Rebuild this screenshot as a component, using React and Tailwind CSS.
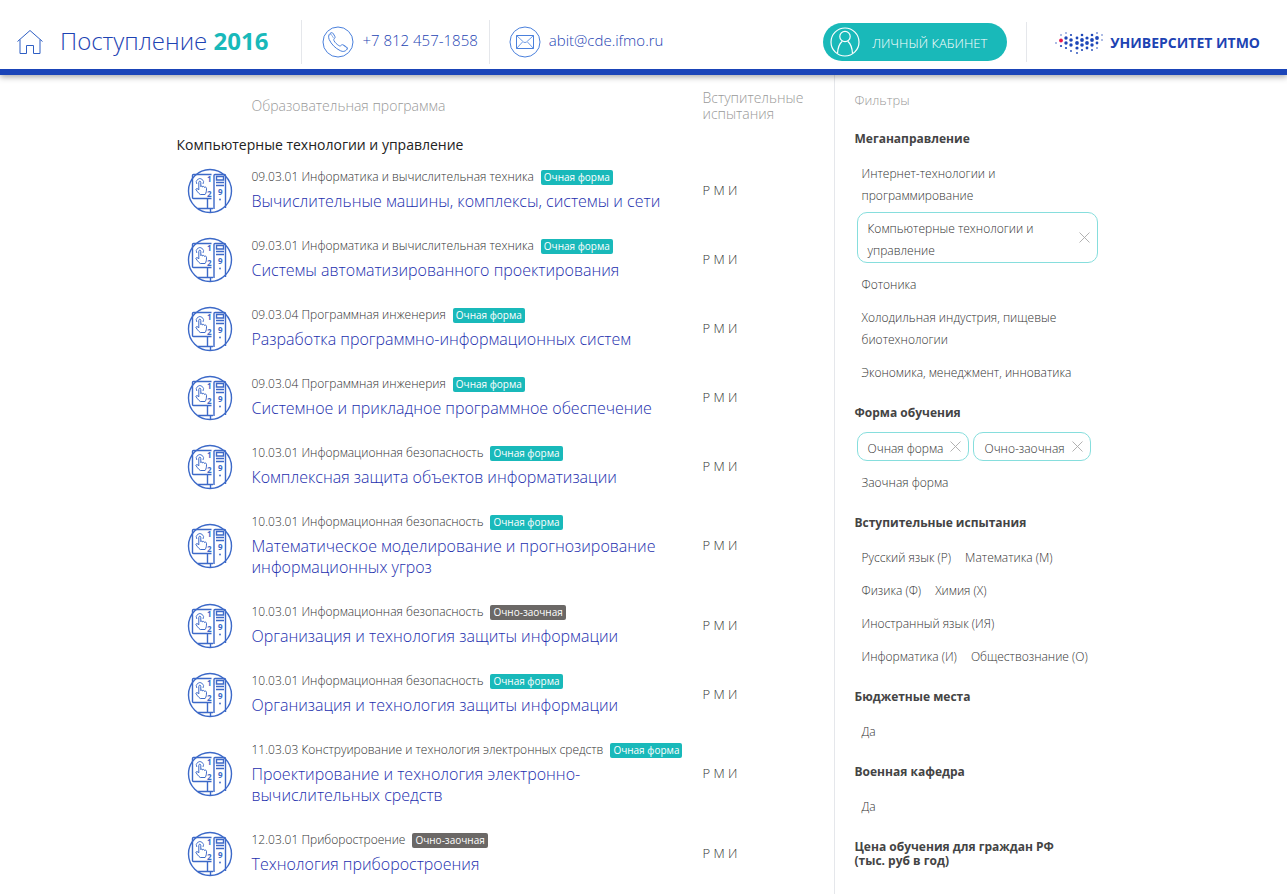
import React, { useState } from 'react';

const programs = [
  { code: '09.03.01', field: 'Информатика и вычислительная техника', form: 'Очная форма', title: 'Вычислительные машины, комплексы, системы и сети' },
  { code: '09.03.01', field: 'Информатика и вычислительная техника', form: 'Очная форма', title: 'Системы автоматизированного проектирования' },
  { code: '09.03.04', field: 'Программная инженерия', form: 'Очная форма', title: 'Разработка программно-информационных систем' },
  { code: '09.03.04', field: 'Программная инженерия', form: 'Очная форма', title: 'Системное и прикладное программное обеспечение' },
  { code: '10.03.01', field: 'Информационная безопасность', form: 'Очная форма', title: 'Комплексная защита объектов информатизации' },
  { code: '10.03.01', field: 'Информационная безопасность', form: 'Очная форма', title: 'Математическое моделирование и прогнозирование информационных угроз' },
  { code: '10.03.01', field: 'Информационная безопасность', form: 'Очно-заочная', title: 'Организация и технология защиты информации' },
  { code: '10.03.01', field: 'Информационная безопасность', form: 'Очная форма', title: 'Организация и технология защиты информации' },
  { code: '11.03.03', field: 'Конструирование и технология электронных средств', form: 'Очная форма', title: 'Проектирование и технология электронно-вычислительных средств' },
  { code: '12.03.01', field: 'Приборостроение', form: 'Очно-заочная', title: 'Технология приборостроения' },
];

const filterGroups = [
  {
    title: 'Меганаправление',
    options: [
      'Интернет-технологии и программирование',
      'Компьютерные технологии и управление',
      'Фотоника',
      'Холодильная индустрия, пищевые биотехнологии',
      'Экономика, менеджмент, инноватика',
    ],
    stacked: true,
  },
  { title: 'Форма обучения', options: ['Очная форма', 'Очно-заочная', 'Заочная форма'] },
  {
    title: 'Вступительные испытания',
    options: [
      'Русский язык (Р)',
      'Математика (М)',
      'Физика (Ф)',
      'Химия (Х)',
      'Иностранный язык (ИЯ)',
      'Информатика (И)',
      'Обществознание (О)',
    ],
  },
  { title: 'Бюджетные места', options: ['Да'] },
  { title: 'Военная кафедра', options: ['Да'] },
  { title: 'Цена обучения для граждан РФ (тыс. руб в год)', options: [] },
];

// [x, y, radius]
const logoDots = [
  [2, 12, 0.7],
  [7, 4, 0.7], [7, 15, 1.1],
  [12, 2, 0.7], [12, 7, 1.7], [12, 12, 1.7], [12, 17, 1.1],
  [17, 4, 1.1], [17, 9, 1.8], [17, 14, 1.7], [17, 20, 0.9],
  [23, 7, 1.4], [23, 12, 1.9], [23, 17, 1.6], [23, 22, 0.9],
  [28, 4, 1.3], [28, 9, 1.9], [28, 14, 1.8], [28, 19, 1.1],
  [33, 7, 1.6], [33, 12, 1.9], [33, 17, 1.4],
  [38, 4, 1.3], [38, 9, 1.9], [38, 14, 1.7], [38, 19, 0.9],
  [43, 2, 0.8], [43, 7, 1.9], [43, 12, 1.4], [43, 17, 0.8],
  [48, 4, 0.7], [48, 9, 0.7],
];

const HomeIcon = () => (
  <svg className="h-[26px] w-7 shrink-0" viewBox="0 0 28 26" fill="none" stroke="#2f5fc4" strokeWidth="1">
    <path d="M1.5 12.5 14 1.5l12.500 11M4 10.500V24.500h6.500V16.500h7v8h6.500V10.500" />
  </svg>
);

const PhoneIcon = () => (
  <svg className="size-8 shrink-0" viewBox="0 0 32 32" fill="none" stroke="#4a80dc" strokeWidth="1">
    <circle cx="16" cy="16" r="15" />
    <path d="M8 7.500c1.300-1.200 2.600-1 3.300.2l1.500 2.600c.6 1.100.2 1.700-.6 2.500-.7.600-.5 1.400 0 2.200 1 1.700 2.600 3.300 4.500 4.500.9.600 1.600.7 2.200 0 .8-.8 1.500-1.100 2.500-.5l3 1.900c1.100.8 1.200 2 .1 3-1.500 1.600-3.600 2.100-6.200.8C13.200 22.200 9.300 18.200 7.200 13.500 6.200 11 6.500 8.900 8 7.500z" />
    <path d="m7.500 8.800 1.400-.8 2.800 4.300M25 23.600l.4-1.600-4.200-2.700" strokeWidth="0.6" />
  </svg>
);

const MailIcon = () => (
  <svg className="size-8 shrink-0" viewBox="0 0 32 32" fill="none" stroke="#4a80dc" strokeWidth="1">
    <circle cx="16" cy="16" r="15" />
    <path d="M7.500 9.500h17v13h-17z" />
    <path d="m7.500 9.500 7 6.500q1.500 1.200 3 0l7-6.500M7.500 22.500l6-6.500M24.500 22.500l-6-6.500" strokeWidth="0.8" />
  </svg>
);

const UserIcon = () => (
  <svg className="size-[30px] shrink-0" viewBox="0 0 30 30" fill="none" stroke="white" strokeWidth="1.2">
    <circle cx="15" cy="15" r="14" />
    <circle cx="15" cy="9.500" r="5.200" />
    <path d="M7.500 26.500c.4-6.500 2-10 4.800-12.200M22.500 26.500c-.4-6.500-2-10-4.800-12.200" />
  </svg>
);

const LogoMark = () => (
  <svg className="h-6 w-[50px] shrink-0" viewBox="0 0 50 24" fill="#1d46b8">
    {logoDots.map(([x, y, r]) => (
      <circle key={`${x}-${y}`} cx={x} cy={y} r={r} />
    ))}
    <circle cx="7" cy="9.500" r="1.900" fill="#e5174f" />
  </svg>
);

const ComputerIcon = () => (
  <svg className="block size-[46px]" viewBox="0 0 46 46" fill="none" stroke="#3c69c8" strokeWidth="1.400">
    <circle cx="23" cy="23" r="21.500" />
    <path d="M24.500 6.500H6.500Q5.500 6.500 5.500 7.500V29.500q0 1 1 1H24.500M20.500 30.500v9.500M11 40.500h15M23.500 40.500v4" />
    <path d="M27 41V7.500q0-1 1-1h9.500q1 0 1 1V40M29.500 8.500h7v3.500h-7zM29 14.500h8M29 17.500h8" />
    <path d="M12 25.500c-1.500-1.600-2.600-3-3.200-4.300.8-1 2-.6 3 .7v-7.600c0-1.500 2-1.500 2 0v4.400c.3-1 1.800-.9 1.900.3.500-.9 1.800-.6 1.900.5.700-.8 1.900-.3 1.900.8 0 2.600-.2 4.500-1.400 6.200h-4.800z" strokeWidth="1" />
    <path d="M9.800 16a3.600 3.600 0 1 1 6.200 0" strokeWidth="0.9" />
    <g fill="#3c69c8" stroke="none" className="font-['Open_Sans',sans-serif] text-[8px] font-bold">
      <text x="20" y="14">1</text>
      <text x="20" y="29">2</text>
      <text x="31" y="27">9</text>
    </g>
    <circle cx="33" cy="31.500" r="0.900" fill="#3c69c8" stroke="none" />
  </svg>
);

const CrossIcon = () => (
  <svg className="size-[11px] shrink-0" viewBox="0 0 11 11" stroke="#a9a9a9" strokeWidth="0.9">
    <path d="M.5.5l10 10M10.500.5l-10 10" />
  </svg>
);

const Header = () => (
  <header className="relative flex h-[75px] items-center border-b-6 border-[#1a44b8] bg-white pt-[14px] pr-[27px] pl-4 font-light text-[#1d43b3] shadow-[0_2px_6px_rgba(0,0,0,0.35)]">
    <a href="#home" className="flex items-center gap-4" aria-label="Поступление 2016">
      <HomeIcon />
      <span className="pb-[2px] text-2xl whitespace-nowrap">
        Поступление <b className="font-bold text-[#19b9ba]">2016</b>
      </span>
    </a>
    <a href="tel:+78124571858" className="ml-[33px] flex h-11 items-center gap-2 border-l border-gray-200 pl-5 text-[15px]">
      <PhoneIcon />
      <span className="pb-[2px] whitespace-nowrap">+7 812 457-1858</span>
    </a>
    <a href="mailto:abit@cde.ifmo.ru" className="ml-[11px] flex h-11 items-center gap-2 border-l border-gray-200 pl-[19px] text-[15px]">
      <MailIcon />
      <span className="pb-[2px]">abit@cde.ifmo.ru</span>
    </a>
    <button type="button" className="ml-auto flex h-[38px] items-center gap-3 rounded-full bg-[#19b9b9] pr-5 pl-[7px] text-[13px] whitespace-nowrap text-white">
      <UserIcon />
      <span className="pt-1">ЛИЧНЫЙ КАБИНЕТ</span>
    </button>
    <a href="#itmo" className="ml-[19px] flex h-10 items-center gap-[6px] border-l border-gray-200 pt-[3px] pl-[27px] text-sm font-bold whitespace-nowrap">
      <LogoMark />
      УНИВЕРСИТЕТ ИТМО
    </a>
  </header>
);

const ProgramRow = ({ program }) => (
  <tr>
    <td className="pl-[10px] align-middle">
      <ComputerIcon />
    </td>
    <td className="pt-[11px] pb-[13px] align-top">
      <div className="flex items-center gap-[7px] text-xs leading-5 whitespace-nowrap text-[#333]">
        {program.code} {program.field}
        <span
          className={`rounded-xs px-[3px] text-[10px] leading-[15px] font-normal text-white ${
            program.form === 'Очная форма' ? 'bg-[#19b9ba]' : 'bg-[#6b6866]'
          }`}
        >
          {program.form}
        </span>
      </div>
      <a href="#program" className="mt-1 block pr-6 text-base leading-[21px] text-[#1d2fae]">
        {program.title}
      </a>
    </td>
    <td className="align-middle text-[13px] text-[#333]">Р М И</td>
  </tr>
);

const FilterOption = ({ label, selected, wide, onClick }) => (
  <button
    type="button"
    aria-pressed={selected}
    onClick={onClick}
    className={`flex items-center justify-between gap-[7px] text-left text-xs leading-[22px] ${
      selected ? 'rounded-[10px] border border-[#86dedd] pr-[7px] pl-[10px]' : 'border-y border-transparent px-[5px]'
    } ${selected ? (wide ? 'mb-px' : 'my-px') : ''} ${wide ? 'w-full' : ''}`}
  >
    <span className={`pt-[5px] ${wide ? 'max-w-[210px]' : ''}`}>{label}</span>
    {selected && <CrossIcon />}
  </button>
);

const Filters = () => {
  const [selected, setSelected] = useState(['Компьютерные технологии и управление', 'Очная форма', 'Очно-заочная']);

  const toggle = (option) => {
    setSelected((prev) => (prev.includes(option) ? prev.filter((o) => o !== option) : [...prev, option]));
  };

  return (
    <aside className="w-[280px] shrink-0 border-l border-gray-200 pt-4 pr-4 pl-5">
      <h2 className="text-[13px] leading-[18px] text-[#999]">Фильтры</h2>
      <div className="mt-[23px] space-y-[21px]">
        {filterGroups.map((group) => (
          <section key={group.title}>
            <h3 className="mb-[11px] max-w-[210px] text-xs leading-[14px] font-bold text-[#444]">{group.title}</h3>
            <div className="ml-[2px] flex flex-wrap gap-1 text-[#333]">
              {group.options.map((option) => (
                <FilterOption
                  key={option}
                  label={option}
                  wide={group.stacked}
                  selected={selected.includes(option)}
                  onClick={() => toggle(option)}
                />
              ))}
            </div>
          </section>
        ))}
      </div>
    </aside>
  );
};

export default function App() {
  return (
    <div className="h-screen overflow-hidden bg-white font-['Open_Sans',sans-serif] font-light">
      <Header />
      <div className="mx-auto flex h-full max-w-[940px]">
        <main className="min-w-0 flex-1 pt-[15px] pl-[3px]">
          <table className="w-full table-fixed text-left">
            <colgroup>
              <col className="w-[75px]" />
              <col />
              <col className="w-[131px]" />
            </colgroup>
            <thead>
              <tr className="text-sm leading-4 text-[#999]">
                <th className="font-light" aria-label="Направление" />
                <th className="font-light">Образовательная программа</th>
                <th className="pr-6 font-light">Вступительные испытания</th>
              </tr>
            </thead>
            <tbody>
              <tr>
                <th colSpan="3" className="pt-3 text-sm leading-[22px] font-normal text-[#222]">
                  Компьютерные технологии и управление
                </th>
              </tr>
              {programs.map((program, i) => (
                <ProgramRow key={i} program={program} />
              ))}
            </tbody>
          </table>
        </main>
        <Filters />
      </div>
    </div>
  );
}
